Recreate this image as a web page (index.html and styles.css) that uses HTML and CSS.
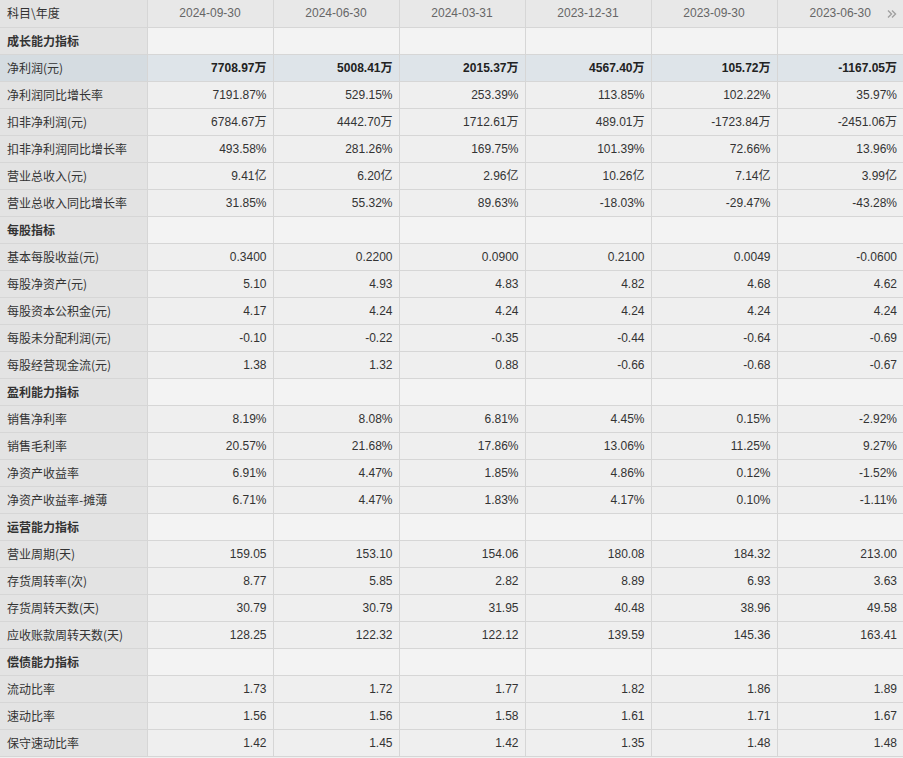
FILE: index.html
```html
<!DOCTYPE html>
<html lang="zh-CN">
<head>
<meta charset="utf-8">
<title>主要指标</title>
<link rel="stylesheet" href="styles.css">
</head>
<body>
<table class="fin">
<colgroup><col class="c-name"><col><col><col><col><col><col></colgroup>
<thead>
<tr class="head">
<th class="name">科目\年度</th><th>2024-09-30</th><th>2024-06-30</th><th>2024-03-31</th><th>2023-12-31</th><th>2023-09-30</th><th class="last">2023-06-30<svg class="more" width="10" height="10" viewBox="0 0 10 10"><path d="M1 1.5 L4.5 5 L1 8.5 M5 1.5 L8.5 5 L5 8.5" fill="none" stroke="#a0a0a0" stroke-width="1.4"/></svg></th>
</tr>
</thead>
<tbody>
<tr class="sec"><td class="name">成长能力指标</td><td></td><td></td><td></td><td></td><td></td><td></td></tr>
<tr class="hl"><td class="name">净利润(元)</td><td>7708.97万</td><td>5008.41万</td><td>2015.37万</td><td>4567.40万</td><td>105.72万</td><td>-1167.05万</td></tr>
<tr><td class="name">净利润同比增长率</td><td>7191.87%</td><td>529.15%</td><td>253.39%</td><td>113.85%</td><td>102.22%</td><td>35.97%</td></tr>
<tr><td class="name">扣非净利润(元)</td><td>6784.67万</td><td>4442.70万</td><td>1712.61万</td><td>489.01万</td><td>-1723.84万</td><td>-2451.06万</td></tr>
<tr><td class="name">扣非净利润同比增长率</td><td>493.58%</td><td>281.26%</td><td>169.75%</td><td>101.39%</td><td>72.66%</td><td>13.96%</td></tr>
<tr><td class="name">营业总收入(元)</td><td>9.41亿</td><td>6.20亿</td><td>2.96亿</td><td>10.26亿</td><td>7.14亿</td><td>3.99亿</td></tr>
<tr><td class="name">营业总收入同比增长率</td><td>31.85%</td><td>55.32%</td><td>89.63%</td><td>-18.03%</td><td>-29.47%</td><td>-43.28%</td></tr>
<tr class="sec"><td class="name">每股指标</td><td></td><td></td><td></td><td></td><td></td><td></td></tr>
<tr><td class="name">基本每股收益(元)</td><td>0.3400</td><td>0.2200</td><td>0.0900</td><td>0.2100</td><td>0.0049</td><td>-0.0600</td></tr>
<tr><td class="name">每股净资产(元)</td><td>5.10</td><td>4.93</td><td>4.83</td><td>4.82</td><td>4.68</td><td>4.62</td></tr>
<tr><td class="name">每股资本公积金(元)</td><td>4.17</td><td>4.24</td><td>4.24</td><td>4.24</td><td>4.24</td><td>4.24</td></tr>
<tr><td class="name">每股未分配利润(元)</td><td>-0.10</td><td>-0.22</td><td>-0.35</td><td>-0.44</td><td>-0.64</td><td>-0.69</td></tr>
<tr><td class="name">每股经营现金流(元)</td><td>1.38</td><td>1.32</td><td>0.88</td><td>-0.66</td><td>-0.68</td><td>-0.67</td></tr>
<tr class="sec"><td class="name">盈利能力指标</td><td></td><td></td><td></td><td></td><td></td><td></td></tr>
<tr><td class="name">销售净利率</td><td>8.19%</td><td>8.08%</td><td>6.81%</td><td>4.45%</td><td>0.15%</td><td>-2.92%</td></tr>
<tr><td class="name">销售毛利率</td><td>20.57%</td><td>21.68%</td><td>17.86%</td><td>13.06%</td><td>11.25%</td><td>9.27%</td></tr>
<tr><td class="name">净资产收益率</td><td>6.91%</td><td>4.47%</td><td>1.85%</td><td>4.86%</td><td>0.12%</td><td>-1.52%</td></tr>
<tr><td class="name">净资产收益率-摊薄</td><td>6.71%</td><td>4.47%</td><td>1.83%</td><td>4.17%</td><td>0.10%</td><td>-1.11%</td></tr>
<tr class="sec"><td class="name">运营能力指标</td><td></td><td></td><td></td><td></td><td></td><td></td></tr>
<tr><td class="name">营业周期(天)</td><td>159.05</td><td>153.10</td><td>154.06</td><td>180.08</td><td>184.32</td><td>213.00</td></tr>
<tr><td class="name">存货周转率(次)</td><td>8.77</td><td>5.85</td><td>2.82</td><td>8.89</td><td>6.93</td><td>3.63</td></tr>
<tr><td class="name">存货周转天数(天)</td><td>30.79</td><td>30.79</td><td>31.95</td><td>40.48</td><td>38.96</td><td>49.58</td></tr>
<tr><td class="name">应收账款周转天数(天)</td><td>128.25</td><td>122.32</td><td>122.12</td><td>139.59</td><td>145.36</td><td>163.41</td></tr>
<tr class="sec"><td class="name">偿债能力指标</td><td></td><td></td><td></td><td></td><td></td><td></td></tr>
<tr><td class="name">流动比率</td><td>1.73</td><td>1.72</td><td>1.77</td><td>1.82</td><td>1.86</td><td>1.89</td></tr>
<tr><td class="name">速动比率</td><td>1.56</td><td>1.56</td><td>1.58</td><td>1.61</td><td>1.71</td><td>1.67</td></tr>
<tr><td class="name">保守速动比率</td><td>1.42</td><td>1.45</td><td>1.42</td><td>1.35</td><td>1.48</td><td>1.48</td></tr>
</tbody>
</table>
</body>
</html>
```
FILE: styles.css
```css
html, body {
  margin: 0;
  padding: 0;
  background: #f0f0f0;
}
body {
  font-family: "Liberation Sans", "Noto Sans CJK SC", sans-serif;
  font-size: 12px;
  color: #333;
}
.fin {
  width: 903px;
  table-layout: fixed;
  border-collapse: collapse;
}
.fin col { width: 126px; }
.fin col.c-name { width: 147px; }
.fin tr { height: 27px; }
.fin th, .fin td {
  padding: 0 6px;
  border: 1px solid #d6d6d6;
  white-space: nowrap;
  overflow: hidden;
  text-align: right;
  background: #efefef;
  line-height: 26px;
  vertical-align: middle;
}
.fin tr > :first-child { border-left: 0; }
.fin tr > :last-child { border-right: 0; }
.fin thead th {
  font-weight: normal;
  text-align: center;
  color: #666;
  background: #e8e8e8;
  border-top: 0;
}
.fin thead th.name { background: #e3e3e3; }
.fin .name {
  text-align: left;
  padding-left: 7px;
  background: #e3e3e3;
  font-family: "Noto Sans CJK SC", "Liberation Sans", sans-serif;
  color: #333;
}
.fin .sec td { background: #f3f3f3; }
.fin .sec td.name {
  background: #e3e3e3;
  font-weight: bold;
}
.fin .hl td {
  background: #dee4e9;
  font-weight: bold;
  color: #222;
}
.fin .hl td.name {
  background: #d5dce1;
  font-weight: normal;
  color: #333;
}
.fin th.last { position: relative; }
.more {
  position: absolute;
  right: 6px;
  top: 9px;
}
```
